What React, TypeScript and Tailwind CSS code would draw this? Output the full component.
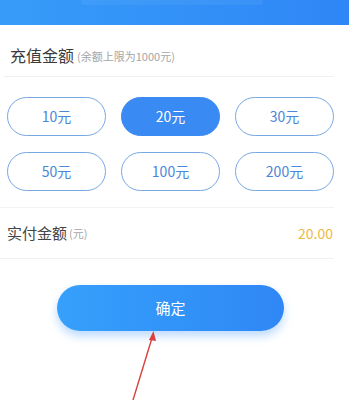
import React, { useState } from 'react';

const amounts = ['10元', '20元', '30元', '50元', '100元', '200元'];

const App: React.FC = () => {
  const [selected, setSelected] = useState(1);

  return (
    <div
      className="relative w-[349px] h-[400px] overflow-hidden bg-white"
      style={{ fontFamily: '"Noto Sans CJK SC", "Noto Sans", sans-serif' }}
    >
      {/* Header */}
      <div className="h-[25px] bg-gradient-to-r from-[#379cf9] to-[#2f86f6] flex justify-center">
        <div className="w-[182px] h-[5px] -ml-[6px] rounded-b-[3px] bg-white/5" />
      </div>

      {/* Title */}
      <div className="h-[51px] flex items-end pb-[13px] pl-[10px]">
        <span className="text-[16px] leading-none text-[#3a3a3a]">充值金额</span>
        <span className="text-[11px] leading-none text-[#a5a5a5] ml-[3px] mb-[1px]">(余额上限为1000元)</span>
      </div>
      <div className="h-px bg-[#f1f1f1] ml-[4px] mr-[15px]" />

      {/* Amount grid */}
      <div className="grid grid-cols-3 gap-x-[15px] gap-y-[16px] pl-[7px] pr-[15px] pt-[20px] pb-[16px]">
        {amounts.map((a, i) => (
          <button
            key={a}
            onClick={() => setSelected(i)}
            className={`h-[39px] rounded-full text-[14px] flex items-center justify-center ${
              i === selected
                ? 'bg-[#3a8af3] text-white border border-[#3a8af3]'
                : 'bg-white text-[#4a87d8] border border-[#78a8e4]'
            }`}
          >
            {a}
          </button>
        ))}
      </div>

      {/* Pay row */}
      <div className="h-px bg-[#f3f3f3] mr-[15px]" />
      <div className="h-[50px] flex items-center justify-between pl-[7px] pr-[16px]">
        <div className="flex items-center">
          <span className="text-[15px] text-[#444]">实付金额</span>
          <span className="text-[11px] text-[#a5a5a5] ml-[2px]">(元)</span>
        </div>
        <span className="text-[14px] text-[#efb943]">20.00</span>
      </div>
      <div className="h-px bg-[#f1f1f1] mr-[15px]" />

      {/* Confirm */}
      <div className="flex justify-center pt-[26px] pr-[8px]">
        <button className="w-[227px] h-[46px] rounded-full bg-gradient-to-r from-[#36a0fb] to-[#2f87f5] text-white text-[15px] shadow-[0_5px_10px_rgba(60,150,250,0.35)]">
          确定
        </button>
      </div>

      {/* Red annotation arrow */}
      <svg className="absolute left-0 top-0" width="349" height="400" viewBox="0 0 349 400">
        <line x1="133" y1="400" x2="152" y2="338" stroke="#d8413c" strokeWidth="1.4" />
        <polygon points="153.5,331 149,340 156,341" fill="#d8413c" />
      </svg>
    </div>
  );
};

export default App;
